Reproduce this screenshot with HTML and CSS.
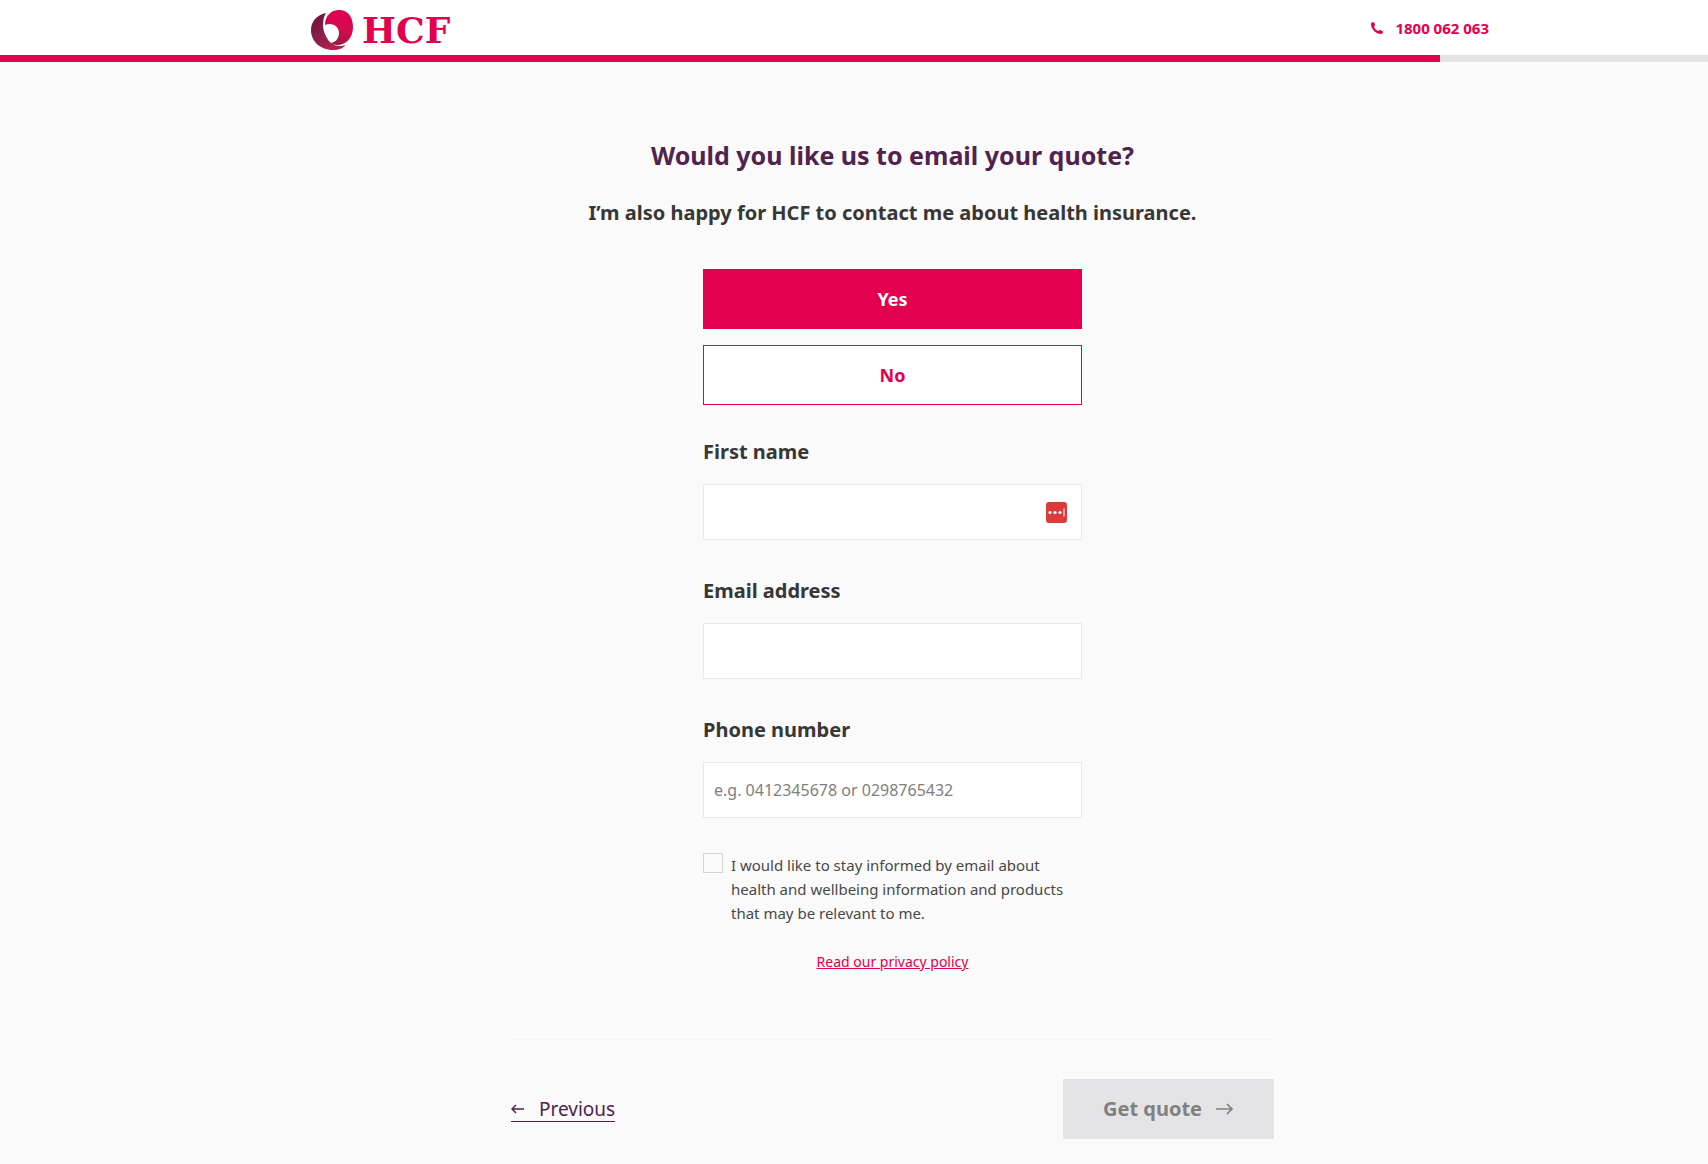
FILE: index.html
```html
<!DOCTYPE html>
<html lang="en">
<head>
  <meta charset="utf-8">
  <meta name="viewport" content="width=device-width, initial-scale=1">
  <title>HCF – Email your quote</title>
  <link rel="stylesheet" href="styles.css">
</head>
<body>
  <header class="header">
    <a class="logo" href="#">
      <svg class="logo-mark" width="43" height="40" viewBox="0 0 43 40" aria-hidden="true">
        <defs>
          <linearGradient id="dark" x1="0" y1="0" x2="0.6" y2="1">
            <stop offset="0" stop-color="#6d1238"/>
            <stop offset="0.6" stop-color="#8a1f49"/>
            <stop offset="1" stop-color="#b5214f"/>
          </linearGradient>
          <linearGradient id="bright" x1="0.6" y1="0" x2="0.3" y2="1">
            <stop offset="0" stop-color="#e2004f"/>
            <stop offset="0.55" stop-color="#d30a4e"/>
            <stop offset="1" stop-color="#8f1d48"/>
          </linearGradient>
        </defs>
        <path fill="url(#dark)" d="M15 3C5 5 0 12 0 20C0 31 9 40 22 40C28 40 32 38 35 35C26 38 19 34 16 28C13 23 12 19 12 15C12 10 13 6 15 3Z"/>
        <path fill="url(#bright)" d="M28 0C37 0 42 7 42 17C42 28 35 35 26 35C23 35 21 34 20 33C25 32 28 28 28 23C28 17 22 12 14 15C14 6 20 0 28 0Z"/>
      </svg>
      <span class="logo-name">HCF</span>
    </a>
    <a class="phone" href="tel:1800062063">
      <svg width="12" height="12" viewBox="0 0 12 12" aria-hidden="true">
        <path fill="currentColor" d="M0 2C0 1 1 0 2 0C3 0 4 2 4 3C4 4 3 4 3 5C4 7 5 8 7 9C8 9 8 8 9 8C10 8 12 9 12 10C12 11 11 12 10 12C5 12 0 7 0 2Z"/>
      </svg>
      <span>1800 062 063</span>
    </a>
  </header>
  <div class="progress"><div class="progress-fill" style="width: 84.3%"></div></div>

  <main class="page">
    <form class="quote">
      <h1 class="title">Would you like us to email your quote?</h1>
      <h2 class="subtitle">I’m also happy for HCF to contact me about health insurance.</h2>

      <div class="fields">
        <div class="choices">
          <button class="choice choice-selected" type="button">Yes</button>
          <button class="choice" type="button">No</button>
        </div>

        <div class="field">
          <label class="label" for="first-name">First name</label>
          <div class="control">
            <input class="input" id="first-name" type="text">
            <svg class="autofill" width="21" height="21" viewBox="0 0 21 21" aria-hidden="true">
              <rect width="21" height="21" rx="3" fill="#db3b3b"/>
              <g fill="#fff">
                <circle cx="4" cy="10.500" r="1.600"/>
                <circle cx="9" cy="10.500" r="1.600"/>
                <circle cx="14" cy="10.500" r="1.600"/>
                <rect x="17.500" y="6.500" width="1" height="8"/>
              </g>
            </svg>
          </div>
        </div>
        <div class="field">
          <label class="label" for="email">Email address</label>
          <input class="input" id="email" type="email">
        </div>
        <div class="field">
          <label class="label" for="phone">Phone number</label>
          <input class="input" id="phone" type="tel" placeholder="e.g. 0412345678 or 0298765432">
        </div>

        <div class="consent">
          <input class="checkbox" id="consent" type="checkbox">
          <label class="consent-text" for="consent">I would like to stay informed by email about health and wellbeing information and products that may be relevant to me.</label>
        </div>
        <a class="policy" href="#">Read our privacy policy</a>
      </div>

      <div class="actions">
        <a class="previous" href="#">
          <svg width="13" height="10" viewBox="0 0 13 10" aria-hidden="true">
            <path fill="none" stroke="currentColor" stroke-width="1.500" d="M13 5H1M5 1L1 5L5 9"/>
          </svg>
          <span>Previous</span>
        </a>
        <button class="submit" type="submit" disabled>
          <span>Get quote</span>
          <svg width="18" height="12" viewBox="0 0 18 12" aria-hidden="true">
            <path fill="none" stroke="currentColor" stroke-width="1.700" d="M0 6H16M11 1L16 6L11 11"/>
          </svg>
        </button>
      </div>
    </form>
  </main>
</body>
</html>
```
FILE: styles.css
```css
* {
  box-sizing: border-box;
}

body {
  margin: 0;
  background: #fafafa;
  color: #373737;
  font-family: "Noto Sans", sans-serif;
  font-size: 16px;
  line-height: 24px;
}

.header {
  display: flex;
  align-items: center;
  justify-content: space-between;
  height: 55px;
  padding: 0 219px 0 311px;
  background: #fff;
}

.logo {
  display: flex;
  align-items: center;
  gap: 8px;
  padding-top: 4px;
  color: #e2004f;
  text-decoration: none;
}

.logo-name {
  font-family: "DejaVu Serif", serif;
  font-size: 36px;
  font-weight: 700;
  line-height: 40px;
}

.phone {
  display: flex;
  align-items: center;
  gap: 12px;
  color: #e2004f;
  font-size: 15px;
  font-weight: 700;
  text-decoration: none;
}

.progress {
  height: 7px;
  background: #e4e4e5;
}

.progress-fill {
  height: 100%;
  background: #e2004f;
}

.page {
  padding: 77px 0 26px 77px;
}

.quote {
  max-width: 763px;
  margin: 0 auto;
}

.title {
  margin: 0 0 26px;
  color: #50234f;
  font-size: 25px;
  line-height: 32px;
  text-align: center;
}

.subtitle {
  margin: 0 0 40px;
  font-size: 20px;
  line-height: 32px;
  text-align: center;
}

.fields {
  display: flex;
  flex-direction: column;
  max-width: 379px;
  margin: 0 auto;
}

.choices {
  display: grid;
  gap: 16px;
  margin-bottom: 31px;
}

.choice {
  height: 60px;
  border: 1px solid #e2004f;
  background: #fff;
  color: #e2004f;
  font: inherit;
  font-size: 18px;
  font-weight: 700;
}

.choice-selected {
  background: #e2004f;
  color: #fff;
}

.field {
  display: grid;
  gap: 16px;
  margin-bottom: 35px;
}

.label {
  font-size: 20px;
  font-weight: 700;
  line-height: 32px;
}

.control {
  position: relative;
}

.input {
  display: block;
  width: 100%;
  height: 56px;
  padding: 0 10px;
  border: 1px solid #e9e9e9;
  background: #fff;
  color: inherit;
  font: inherit;
}

.input::placeholder {
  color: #808080;
}

.autofill {
  position: absolute;
  top: 18px;
  right: 15px;
}

.consent {
  display: flex;
  align-items: flex-start;
  gap: 8px;
}

.checkbox {
  flex: none;
  width: 20px;
  height: 20px;
  margin: 0;
  border: 1px solid #d4d4d4;
  background: #fafafa;
  appearance: none;
}

.consent-text {
  color: #484848;
  font-size: 15px;
}

.policy {
  margin-top: 25px;
  color: #e2004f;
  font-size: 14px;
  text-align: center;
}

.actions {
  display: flex;
  align-items: center;
  justify-content: space-between;
  margin-top: 65px;
  padding-top: 39px;
  border-top: 1px solid #f4f4f4;
}

.previous {
  display: flex;
  align-items: center;
  gap: 15px;
  border-bottom: 1px solid #50234f;
  color: #50234f;
  font-size: 19px;
  text-decoration: none;
}

.submit {
  display: flex;
  align-items: center;
  justify-content: center;
  gap: 14px;
  width: 211px;
  height: 60px;
  border: 0;
  background: #e4e4e6;
  color: #808080;
  font: inherit;
  font-size: 20px;
  font-weight: 700;
}
```
